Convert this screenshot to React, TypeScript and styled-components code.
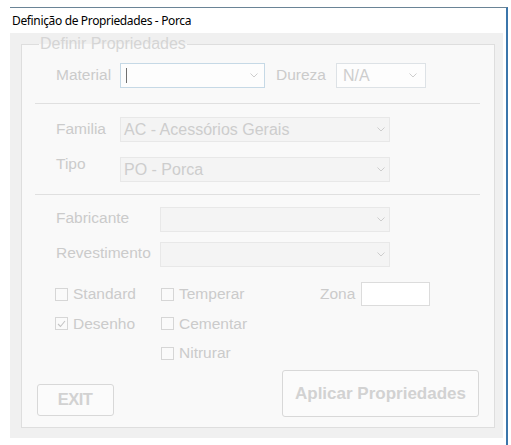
import React from "react";
import styled, { createGlobalStyle } from "styled-components";

const Global = createGlobalStyle`
  html, body { margin: 0; padding: 0; background: #ffffff; }
  body {
    width: 511px;
    height: 445px;
    overflow: hidden;
    font-family: "Liberation Sans", Arial, sans-serif;
  }
`;

const Window = styled.div`
  margin: 7px 0 0 10px;
  width: 498px;
  height: 438px;
  box-sizing: border-box;
  border-top: 1px solid #6a8496;
  border-right: 2px solid #3b76ab;
  display: flex;
  flex-direction: column;
`;

const TitleBar = styled.div`
  height: 25px;
  display: flex;
  align-items: center;
  padding-left: 2px;
  font-family: "Noto Sans", "Open Sans", sans-serif;
  font-size: 12px;
  letter-spacing: -0.35px;
  color: #000000;
  background: #ffffff;
`;

const Form = styled.div`
  width: 493px;
  height: 405px;
  box-sizing: border-box;
  background: #f0f0f0;
  padding: 2px 8px 10px 11px;
`;

const Group = styled.fieldset`
  margin: 0;
  padding: 0 0 10px 0;
  min-width: 0;
  border: 1px solid #dedede;
  background: #f9f9f9;
  display: flex;
  flex-direction: column;
`;

const Legend = styled.legend`
  margin-left: 17px;
  padding: 0 1px;
  font-size: 16px;
  line-height: 18px;
  color: #d5d5d5;
`;

const Row = styled.div<{ $top: number; $left?: number }>`
  display: flex;
  align-items: flex-start;
  margin-top: ${(p) => p.$top}px;
  padding-left: ${(p) => p.$left ?? 34}px;
`;

const Label = styled.span<{ $w?: number; $dy?: number; $ml?: number }>`
  width: ${(p) => (p.$w ? `${p.$w}px` : "auto")};
  flex: none;
  margin-top: ${(p) => p.$dy ?? 2}px;
  margin-left: ${(p) => p.$ml ?? 0}px;
  margin-right: ${(p) => (p.$w ? 0 : 10)}px;
  font-size: 15.5px;
  line-height: 18px;
  color: #cbcbcb;
  white-space: nowrap;
`;

type ComboKind = "disabled" | "active" | "light";

const Combo = styled.div<{ $w: number; $kind: ComboKind; $padL?: number; $padR?: number }>`
  width: ${(p) => p.$w}px;
  height: 25px;
  flex: none;
  box-sizing: border-box;
  display: flex;
  align-items: center;
  justify-content: space-between;
  padding: 0 ${(p) => p.$padR ?? 4}px 0 ${(p) => p.$padL ?? 3}px;
  border: 1px solid
    ${(p) => (p.$kind === "active" ? "#c6d9e6" : p.$kind === "light" ? "#dde2e6" : "#e8e8e8")};
  background: ${(p) => (p.$kind === "disabled" ? "#f4f4f4" : "#fdfdfd")};
  font-size: 16px;
  color: #cdcdcd;
  white-space: nowrap;
`;

const Caret = styled.span`
  width: 1px;
  height: 15px;
  margin-left: 5px;
  background: #707070;
`;

const Separator = styled.div<{ $top: number }>`
  margin: ${(p) => p.$top}px 14px 0 13px;
  height: 1px;
  background: #e0e0e0;
`;

const CheckGrid = styled.div`
  margin-top: 15px;
  padding-left: 33px;
  display: grid;
  grid-template-columns: 106px 159px auto;
  grid-auto-rows: 24px;
  row-gap: 5.5px;
  align-items: center;
`;

const CheckItem = styled.label`
  display: flex;
  align-items: center;
  gap: 5px;
  font-size: 15.5px;
  line-height: 18px;
  color: #cbcbcb;
  white-space: nowrap;
`;

const Box = styled.span`
  width: 13px;
  height: 13px;
  box-sizing: border-box;
  border: 1px solid #d6d6d6;
  background: #fafafa;
  display: flex;
  align-items: center;
  justify-content: center;
`;

const ZonaCell = styled.div`
  display: flex;
  align-items: center;
  gap: 6px;
  font-size: 15.5px;
  color: #cbcbcb;
`;

const ZonaInput = styled.div`
  width: 69px;
  height: 24px;
  box-sizing: border-box;
  border: 1px solid #dcdcdc;
  background: #ffffff;
`;

const ButtonRow = styled.div`
  margin-top: 5px;
  padding: 0 15px 0 14.5px;
  display: flex;
  justify-content: space-between;
  align-items: flex-end;
`;

const Button = styled.div<{ $w: number; $h: number; $size: number; $mb?: number }>`
  width: ${(p) => p.$w}px;
  height: ${(p) => p.$h}px;
  margin-bottom: ${(p) => p.$mb ?? 0}px;
  box-sizing: border-box;
  border: 1px solid #d8d8d8;
  border-radius: 3px;
  background: #fbfbfb;
  display: flex;
  align-items: center;
  justify-content: center;
  font-weight: bold;
  font-size: ${(p) => p.$size}px;
  color: #d2d2d2;
  letter-spacing: ${(p) => (p.$size < 17 ? "-0.6px" : "0")};
`;

const Chevron = () => (
  <svg width="8" height="5" viewBox="0 0 8 5">
    <polyline points="0.5,0.5 4,4 7.5,0.5" fill="none" stroke="#cdcdcd" strokeWidth="1" />
  </svg>
);

const Check = ({ checked, children }: { checked?: boolean; children: React.ReactNode }) => (
  <CheckItem>
    <Box>
      {checked && (
        <svg width="9" height="8" viewBox="0 0 9 8">
          <polyline points="1,4 3.5,6.5 8,1" fill="none" stroke="#c4c4c4" strokeWidth="1.1" />
        </svg>
      )}
    </Box>
    {children}
  </CheckItem>
);

export default function App() {
  return (
    <>
      <Global />
      <Window>
        <TitleBar>Definição de Propriedades - Porca</TitleBar>
        <Form>
          <Group>
            <Legend>Definir Propriedades</Legend>

            <Row $top={10}>
              <Label $w={64} $dy={3}>Material</Label>
              <Combo $w={145} $kind="active" $padR={6} $padL={0}>
                <Caret />
                <Chevron />
              </Combo>
              <Label $dy={3} $ml={11}>Dureza</Label>
              <Combo $w={90} $kind="light" $padL={6} $padR={8}>
                N/A
                <Chevron />
              </Combo>
            </Row>

            <Separator $top={15} />

            <Row $top={13}>
              <Label $w={64} $dy={2.5}>Familia</Label>
              <Combo $w={270} $kind="disabled">
                AC - Acessórios Gerais
                <Chevron />
              </Combo>
            </Row>

            <Row $top={15}>
              <Label $w={64} $dy={-2}>Tipo</Label>
              <Combo $w={270} $kind="disabled">
                PO - Porca
                <Chevron />
              </Combo>
            </Row>

            <Separator $top={12} />

            <Row $top={12}>
              <Label $w={104} $dy={1.5}>Fabricante</Label>
              <Combo $w={230} $kind="disabled">
                <span />
                <Chevron />
              </Combo>
            </Row>

            <Row $top={10}>
              <Label $w={104} $dy={1.5}>Revestimento</Label>
              <Combo $w={230} $kind="disabled">
                <span />
                <Chevron />
              </Combo>
            </Row>

            <CheckGrid>
              <Check>Standard</Check>
              <Check>Temperar</Check>
              <ZonaCell>
                Zona
                <ZonaInput />
              </ZonaCell>
              <Check checked>Desenho</Check>
              <Check>Cementar</Check>
              <span />
              <span />
              <Check>Nitrurar</Check>
            </CheckGrid>

            <ButtonRow>
              <Button $w={77} $h={32} $size={16.5} $mb={1.5}>EXIT</Button>
              <Button $w={197} $h={47} $size={17}>Aplicar Propriedades</Button>
            </ButtonRow>
          </Group>
        </Form>
      </Window>
    </>
  );
}
